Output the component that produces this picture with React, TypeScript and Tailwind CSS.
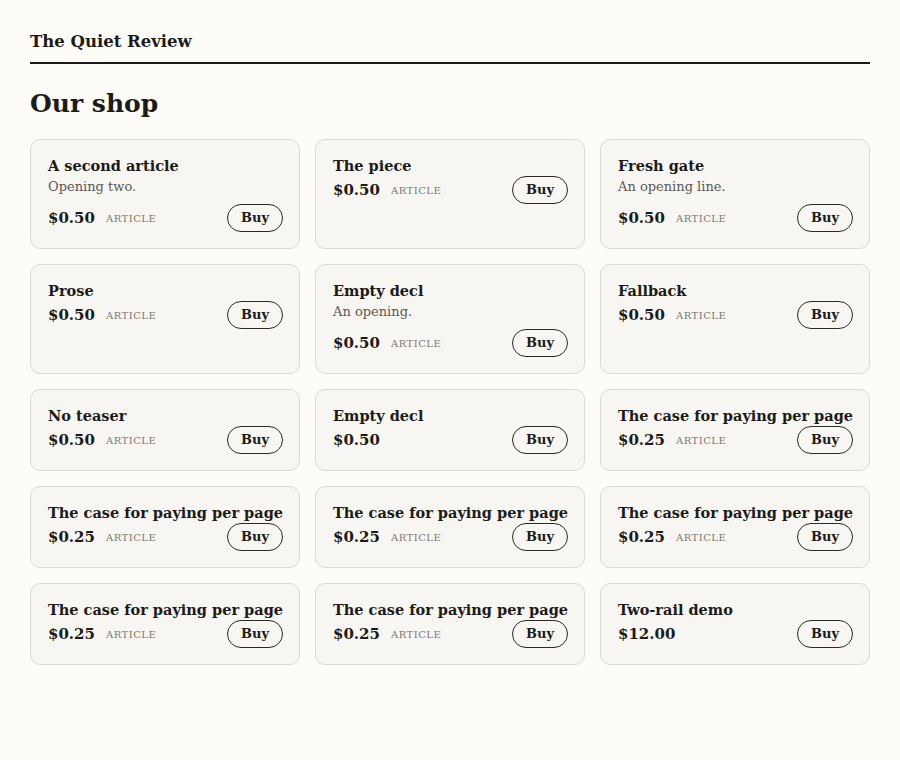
import React from 'react';

type Item = { title: string; teaser?: string; price: string; kind?: string };

const items: Item[] = [
  { title: 'A second article', teaser: 'Opening two.', price: '$0.50', kind: 'Article' },
  { title: 'The piece', price: '$0.50', kind: 'Article' },
  { title: 'Fresh gate', teaser: 'An opening line.', price: '$0.50', kind: 'Article' },
  { title: 'Prose', price: '$0.50', kind: 'Article' },
  { title: 'Empty decl', teaser: 'An opening.', price: '$0.50', kind: 'Article' },
  { title: 'Fallback', price: '$0.50', kind: 'Article' },
  { title: 'No teaser', price: '$0.50', kind: 'Article' },
  { title: 'Empty decl', price: '$0.50' },
  { title: 'The case for paying per page', price: '$0.25', kind: 'Article' },
  { title: 'The case for paying per page', price: '$0.25', kind: 'Article' },
  { title: 'The case for paying per page', price: '$0.25', kind: 'Article' },
  { title: 'The case for paying per page', price: '$0.25', kind: 'Article' },
  { title: 'The case for paying per page', price: '$0.25', kind: 'Article' },
  { title: 'The case for paying per page', price: '$0.25', kind: 'Article' },
  { title: 'Two-rail demo', price: '$12.00' },
];

const ShopCard = ({ item }: { item: Item }) => (
  <div className="bg-[#f7f6f2] border border-[#dcdad5] rounded-[10px] p-4 pl-[17px] pr-4">
    <h3 className="text-[14.5px] leading-5 font-bold text-[#1c1b19] whitespace-nowrap">{item.title}</h3>
    {item.teaser && <p className="text-[13px] leading-[21px] text-[#5a5854] mb-[7px]">{item.teaser}</p>}
    <div className="flex items-center h-7">
      <span className="text-[15px] font-bold text-[#1c1b19]">{item.price}</span>
      {item.kind && (
        <span className="ml-[11px] text-[10px] uppercase tracking-[0.05em] text-[#7a7873]">{item.kind}</span>
      )}
      <button className="ml-auto h-7 px-[13px] rounded-full border border-[#2a2926] text-[13px] font-bold text-[#1c1b19] bg-transparent">
        Buy
      </button>
    </div>
  </div>
);

export default function App() {
  return (
    <div className="min-h-screen bg-[#fdfcf8] font-['DejaVu_Serif',serif]">
      <div className="px-[30px] pt-[30px]">
        <header className="border-b-2 border-[#1c1b19] pb-[8px]">
          <div className="text-[16.5px] leading-6 font-bold text-[#1c1b19]">The Quiet Review</div>
        </header>
        <h1 className="mt-[22px] text-[25px] leading-9 font-bold text-[#1c1b19]">Our shop</h1>
        <div className="mt-[17px] grid grid-cols-3 gap-[15px]">
          {items.map((item, i) => (
            <ShopCard key={i} item={item} />
          ))}
        </div>
      </div>
    </div>
  );
}
